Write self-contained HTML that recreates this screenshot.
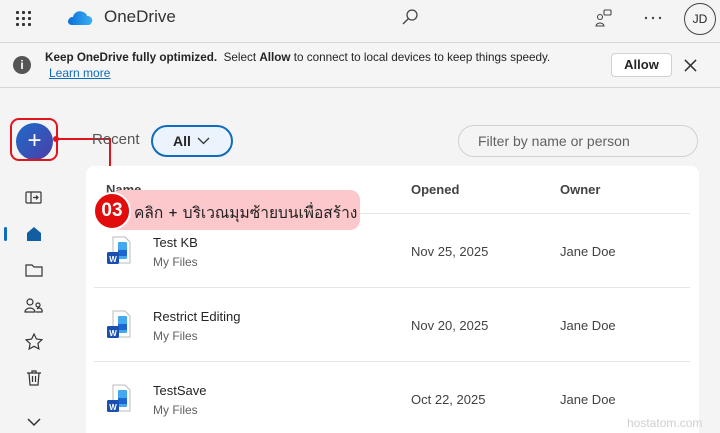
<!DOCTYPE html>
<html style="overflow:hidden;height:433px"><head><style>
*{margin:0;padding:0;box-sizing:border-box}
body{width:720px;height:433px;overflow:hidden;background:#f4f4f4;font-family:"Segoe UI","Liberation Sans","DejaVu Sans",sans-serif;color:#242424;position:relative}
.a{position:absolute}
.dot{position:absolute;width:3px;height:3px;background:#333;border-radius:1px}
.t{font-size:13px}
.sub{font-size:12px;color:#616161}
.hd{font-size:13px;font-weight:600;color:#424242}
.line{position:absolute;left:94px;width:596px;height:1px;background:#e6e6e6}
</style></head><body>
<div class="a" style="left:16px;top:11px;width:16px;height:16px">
<div class="dot" style="left:0;top:0"></div><div class="dot" style="left:6px;top:0"></div><div class="dot" style="left:12px;top:0"></div>
<div class="dot" style="left:0;top:6px"></div><div class="dot" style="left:6px;top:6px"></div><div class="dot" style="left:12px;top:6px"></div>
<div class="dot" style="left:0;top:12px"></div><div class="dot" style="left:6px;top:12px"></div><div class="dot" style="left:12px;top:12px"></div>
</div>
<svg class="a" style="left:67px;top:9px" width="26" height="18" viewBox="0 0 26 18"><defs><linearGradient id="g" x1="0" x2="1"><stop offset="0" stop-color="#0a6fd8"/><stop offset="1" stop-color="#3cb0f5"/></linearGradient></defs><path d="M5 16C1 16 0 12 2 10 3 8 5 8 6 8 7 3 12 1 16 3 19 4 20 6 20 7 24 7 26 10 25 13 24 15 23 16 21 16Z" fill="url(#g)"/></svg>
<div class="a" style="left:104px;top:7px;font-size:17px;color:#333">OneDrive</div>
<svg class="a" style="left:401px;top:8px" width="18" height="18" viewBox="0 0 18 18" fill="none" stroke="#444" stroke-width="1.3"><circle cx="11" cy="7" r="5"/><path d="M7.5 10.5L2 16"/></svg>
<svg class="a" style="left:595px;top:9px" width="18" height="18" viewBox="0 0 18 18" fill="none" stroke="#444" stroke-width="1.1"><circle cx="5" cy="8" r="2.5"/><path d="M1 17a4 3 0 0 1 8 0z"/><rect x="9" y="1" width="7" height="5" rx="1"/></svg>
<svg class="a" style="left:644px;top:16px" width="18" height="4"><circle cx="2" cy="2" r="1.2" fill="#444"/><circle cx="9" cy="2" r="1.2" fill="#444"/><circle cx="16" cy="2" r="1.2" fill="#444"/></svg>
<div class="a" style="left:684px;top:3px;width:32px;height:32px;border:1px solid #444;border-radius:50%;font-size:12px;text-align:center;line-height:30px">JD</div>
<div class="a" style="left:0;top:42px;width:720px;height:46px;background:#f5f5f5;border-top:1px solid #d6d6d6;border-bottom:1px solid #d6d6d6"></div>
<div class="a" style="left:13px;top:56px;width:18px;height:18px;border-radius:50%;background:#555;color:#fff;font-size:12px;font-weight:bold;text-align:center;line-height:18px">i</div>
<div class="a" style="left:45px;top:51px;font-size:11.7px"><b>Keep OneDrive fully optimized.</b>&nbsp; Select <b>Allow</b> to connect to local devices to keep things speedy.</div>
<div class="a" style="left:49px;top:66px;font-size:12px;color:#0f6cbd;text-decoration:underline">Learn more</div>
<div class="a" style="left:611px;top:53px;width:61px;height:24px;background:#fff;border:1px solid #d1d1d1;border-radius:4px;font-size:13px;font-weight:600;text-align:center;line-height:22px">Allow</div>
<svg class="a" style="left:684px;top:59px" width="13" height="13" viewBox="0 0 14 14" stroke="#333" stroke-width="1.6"><path d="M1 1L13 13M13 1L1 13"/></svg>
<div class="a" style="left:16px;top:123px;width:37px;height:37px;border-radius:50%;background:linear-gradient(135deg,#1f6bc8,#4a3fa8);color:#fff;font-size:24px;text-align:center;line-height:35px">+</div>
<div class="a" style="left:10px;top:118px;width:48px;height:43px;border:2px solid #e3131b;border-radius:9px"></div>
<div class="a" style="left:56px;top:138px;width:54px;height:2px;background:#e3131b"></div>
<div class="a" style="left:53px;top:136px;width:6px;height:6px;border-radius:50%;background:#e3131b"></div>
<div class="a" style="left:109px;top:138px;width:2px;height:58px;background:#e3131b"></div>
<div class="a" style="left:92px;top:131px;font-size:15px;color:#555">Recent</div>
<div class="a" style="left:151px;top:125px;width:82px;height:32px;border:2px solid #0f6cbd;border-radius:16px;background:#ebf3fc;font-size:14px;font-weight:600;padding-left:20px;line-height:28px">All</div>
<svg class="a" style="left:197px;top:137px" width="13" height="8" viewBox="0 0 13 8" fill="none" stroke="#333" stroke-width="1.3"><path d="M1 1l5.5 5.5L12 1"/></svg>
<div class="a" style="left:458px;top:125px;width:240px;height:32px;border:1px solid #d1d1d1;border-radius:16px;font-size:14px;color:#616161;padding-left:19px;line-height:30px">Filter by name or person</div>
<svg class="a" style="left:25px;top:190px" width="18" height="16" viewBox="0 0 18 16" fill="none" stroke="#333" stroke-width="1.2"><rect x="1" y="2" width="15" height="11" rx="1"/><path d="M6 2v11M8 7.5h5M11 5.5l2 2-2 2"/></svg>
<div class="a" style="left:4px;top:227px;width:3px;height:14px;background:#0f6cbd;border-radius:2px"></div>
<svg class="a" style="left:26px;top:226px" width="16" height="16" viewBox="0 0 16 16"><path d="M1 7L8 1l7 6v8H1z" fill="#115ea3"/></svg>
<svg class="a" style="left:25px;top:262px" width="18" height="16" viewBox="0 0 18 16" fill="none" stroke="#333" stroke-width="1.2"><path d="M1 3h6l2 2h8v9H1z"/></svg>
<svg class="a" style="left:24px;top:298px" width="20" height="16" viewBox="0 0 20 16" fill="none" stroke="#333" stroke-width="1.2"><circle cx="6" cy="4" r="3"/><path d="M1 14a5 4 0 0 1 10 0z"/><circle cx="14" cy="7" r="2"/><path d="M12 14h6a3 3 0 0 0-5-3"/></svg>
<svg class="a" style="left:25px;top:333px" width="18" height="18" viewBox="0 0 18 18" fill="none" stroke="#333" stroke-width="1.2"><path d="M9 1l2.4 5 5.5.7-4 3.8 1 5.4L9 13.3 4.1 16l1-5.4-4-3.8 5.5-.7z"/></svg>
<svg class="a" style="left:26px;top:369px" width="16" height="18" viewBox="0 0 16 18" fill="none" stroke="#333" stroke-width="1.2"><path d="M1 4h14M6 4V2h4v2M3 4l1 12h8l1-12M6.5 7v6M9.5 7v6"/></svg>
<svg class="a" style="left:27px;top:418px" width="14" height="9" viewBox="0 0 14 9" fill="none" stroke="#333" stroke-width="1.5"><path d="M1 1l6 6 6-6"/></svg>
<div class="a" style="left:86px;top:166px;width:613px;height:280px;background:#fff;border-radius:8px"></div>
<div class="a hd" style="left:106px;top:182px">Name</div>
<div class="a hd" style="left:411px;top:182px">Opened</div>
<div class="a hd" style="left:560px;top:182px">Owner</div>
<div class="line" style="top:213px"></div>
<div class="line" style="top:287px"></div>
<div class="line" style="top:361px"></div>
<svg class="a" style="left:106px;top:236px" width="26" height="30" viewBox="0 0 26 30"><path d="M7 1h12l5 5v21H7z" fill="#fff" stroke="#bbb"/><rect x="12" y="6" width="9" height="17" rx="1" fill="#43a8f0"/><rect x="12" y="14" width="9" height="6" fill="#1d66d1"/><rect x="1" y="16" width="12" height="12" rx="1.5" fill="#1a4fb0"/><text x="7" y="26" font-size="8" font-weight="bold" fill="#fff" text-anchor="middle" font-family="Liberation Sans">W</text></svg>
<svg class="a" style="left:106px;top:310px" width="26" height="30" viewBox="0 0 26 30"><path d="M7 1h12l5 5v21H7z" fill="#fff" stroke="#bbb"/><rect x="12" y="6" width="9" height="17" rx="1" fill="#43a8f0"/><rect x="12" y="14" width="9" height="6" fill="#1d66d1"/><rect x="1" y="16" width="12" height="12" rx="1.5" fill="#1a4fb0"/><text x="7" y="26" font-size="8" font-weight="bold" fill="#fff" text-anchor="middle" font-family="Liberation Sans">W</text></svg>
<svg class="a" style="left:106px;top:384px" width="26" height="30" viewBox="0 0 26 30"><path d="M7 1h12l5 5v21H7z" fill="#fff" stroke="#bbb"/><rect x="12" y="6" width="9" height="17" rx="1" fill="#43a8f0"/><rect x="12" y="14" width="9" height="6" fill="#1d66d1"/><rect x="1" y="16" width="12" height="12" rx="1.5" fill="#1a4fb0"/><text x="7" y="26" font-size="8" font-weight="bold" fill="#fff" text-anchor="middle" font-family="Liberation Sans">W</text></svg>
<div class="a t" style="left:153px;top:235px">Test KB</div><div class="a sub" style="left:153px;top:255px">My Files</div>
<div class="a t" style="left:411px;top:244px;color:#424242">Nov 25, 2025</div><div class="a t" style="left:560px;top:244px;color:#424242">Jane Doe</div>
<div class="a t" style="left:153px;top:309px">Restrict Editing</div><div class="a sub" style="left:153px;top:329px">My Files</div>
<div class="a t" style="left:411px;top:318px;color:#424242">Nov 20, 2025</div><div class="a t" style="left:560px;top:318px;color:#424242">Jane Doe</div>
<div class="a t" style="left:153px;top:383px">TestSave</div><div class="a sub" style="left:153px;top:403px">My Files</div>
<div class="a t" style="left:411px;top:392px;color:#424242">Oct 22, 2025</div><div class="a t" style="left:560px;top:392px;color:#424242">Jane Doe</div>
<div class="a" style="left:110px;top:190px;width:250px;height:40px;background:#fdc8cc;border-radius:10px"></div>
<div class="a" style="left:93px;top:192px;width:38px;height:38px;border-radius:50%;background:#e30c0c;border:2px solid #fff;color:#fff;font-size:19px;font-weight:bold;text-align:center;line-height:33px">03</div>
<div class="a" style="left:134px;top:200px;font-size:15.5px;color:#222;white-space:nowrap;font-family:'Loma','Garuda','Norasi','DejaVu Sans',sans-serif">คลิก + บริเวณมุมซ้ายบนเพื่อสร้าง</div>
<div class="a" style="left:627px;top:416px;font-size:12px;color:#cfcfcf">hostatom.com</div>
</body></html>
